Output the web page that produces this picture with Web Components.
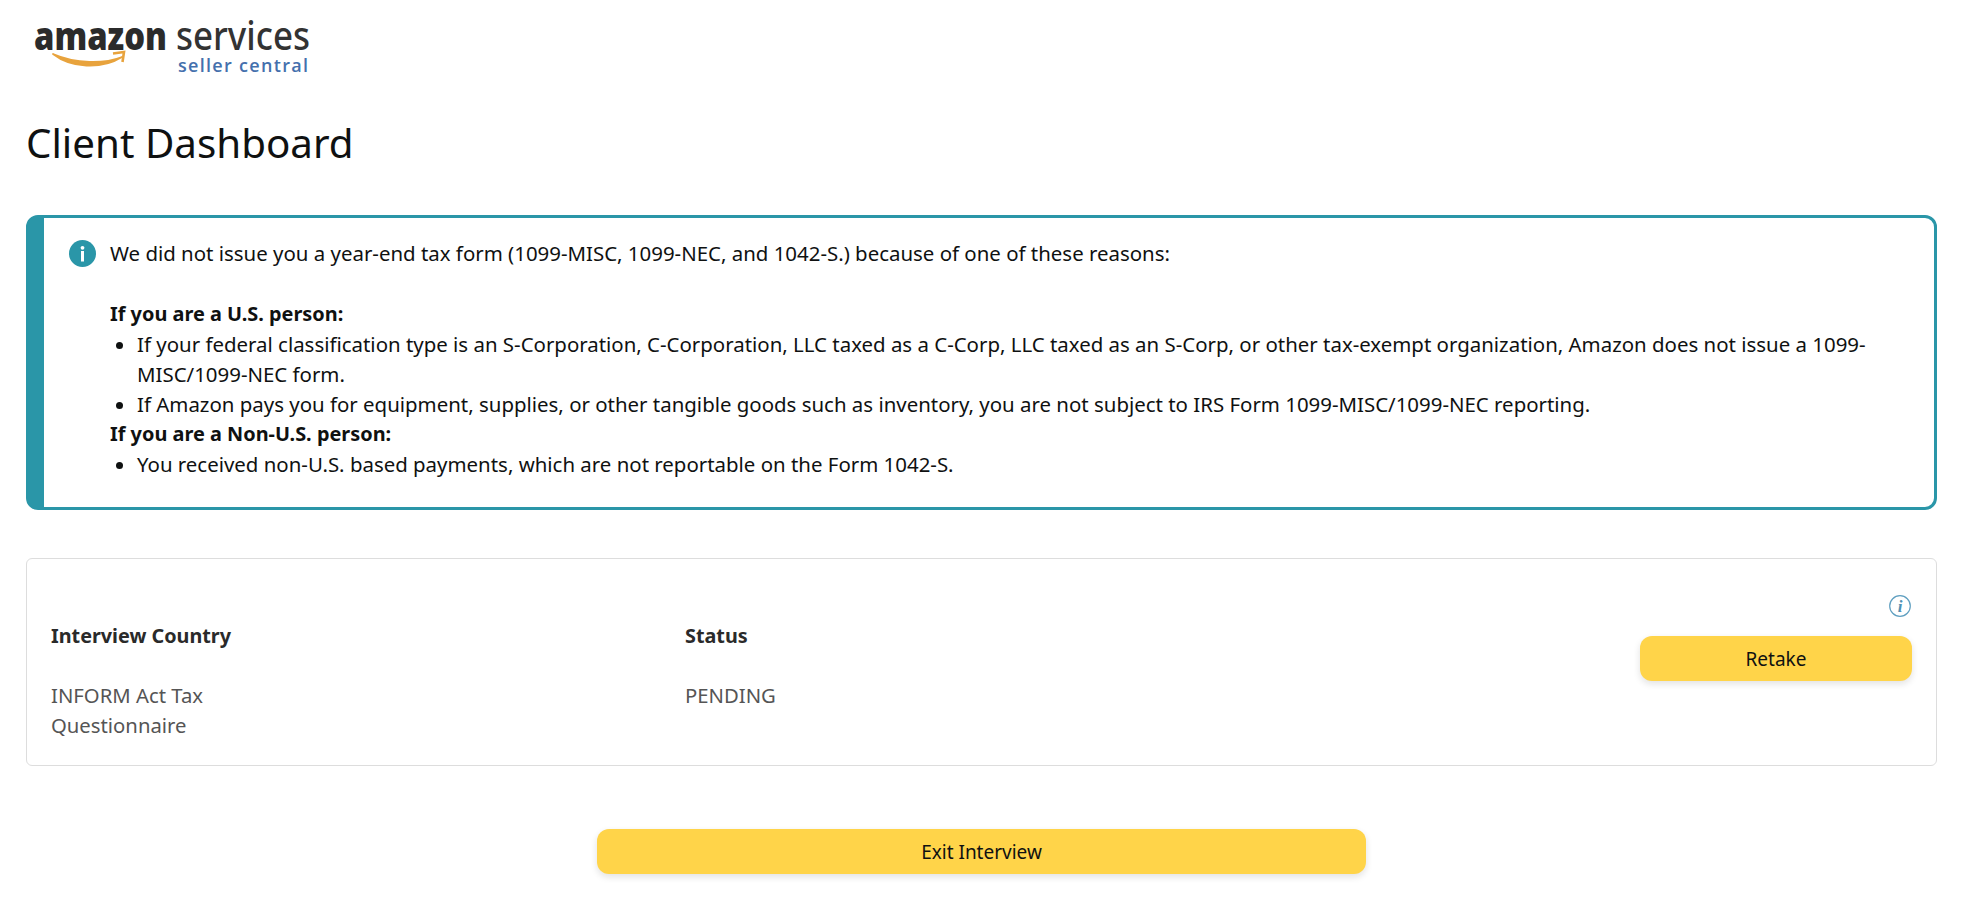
<!DOCTYPE html>
<html>
<head>
<meta charset="utf-8">
<title>Client Dashboard</title>
<style>
  html, body { margin: 0; background: #fff; }
  body { font-family: "Noto Sans", "Open Sans", sans-serif; color: #0f1111; }
</style>
</head>
<body>
<client-dashboard>
  <info-alert>
    <p slot="intro">We did not issue you a year-end tax form (1099-MISC, 1099-NEC, and 1042-S.) because of one of these reasons:</p>
    <b>If you are a U.S. person:</b>
    <ul>
      <li>If your federal classification type is an S-Corporation, C-Corporation, LLC taxed as a C-Corp, LLC taxed as an S-Corp, or other tax-exempt organization, Amazon does not issue a 1099-MISC/1099-NEC form.</li>
      <li>If Amazon pays you for equipment, supplies, or other tangible goods such as inventory, you are not subject to IRS Form 1099-MISC/1099-NEC reporting.</li>
    </ul>
    <b>If you are a Non-U.S. person:</b>
    <ul>
      <li>You received non-U.S. based payments, which are not reportable on the Form 1042-S.</li>
    </ul>
  </info-alert>
  <interview-card country="INFORM Act Tax Questionnaire" status="PENDING"></interview-card>
</client-dashboard>

<script>
const logoSvg = `
  <svg width="300" height="76" viewBox="0 0 300 76" aria-label="amazon services seller central">
    <text x="8" y="46" font-family="Open Sans, sans-serif" font-weight="800" font-size="38" fill="#2b2b2b" textLength="133" lengthAdjust="spacingAndGlyphs">amazon</text>
    <text x="150" y="46" font-family="Noto Sans, sans-serif" font-weight="500" font-size="39" fill="#333" textLength="134" lengthAdjust="spacingAndGlyphs">services</text>
    <text x="152" y="68" font-family="Open Sans, sans-serif" font-weight="600" font-size="18" fill="#4470ad" textLength="130" lengthAdjust="spacing">seller central</text>
    <path d="M27 50C45 64 75 66 96 53C78 60 50 60 27 50Z" fill="#e8a33d" stroke="#e8a33d" stroke-width="1.800" stroke-linejoin="round"/>
    <path d="M87 49.500L98 48L96.500 58" fill="none" stroke="#e8a33d" stroke-width="2.600"/>
  </svg>`;

class ClientDashboard extends HTMLElement {
  constructor() {
    super();
    this.attachShadow({ mode: 'open' });
    this.shadowRoot.innerHTML = `
      <style>
        :host { display: block; padding: 0 29px 0 26px; }
        .logo { display: block; height: 80px; }
        .logo svg { display: block; margin-top: 4px; }
        h1 { margin: 35px 0 48px; font-size: 40.300px; line-height: 48px; font-weight: 400; color: #0f1111; }
        .exit { display: flex; justify-content: center; padding: 63px 0 39px 0; }
        .exit yellow-button { width: 769px; }
        .stack { display: flex; flex-direction: column; gap: 48px; }
      </style>
      <div class="logo">${logoSvg}</div>
      <h1>Client Dashboard</h1>
      <div class="stack"><slot></slot></div>
      <div class="exit"><yellow-button>Exit Interview</yellow-button></div>
    `;
  }
}

class InfoAlert extends HTMLElement {
  constructor() {
    super();
    this.attachShadow({ mode: 'open' });
    this.shadowRoot.innerHTML = `
      <style>
        :host {
          display: block;
          box-sizing: border-box;
          border: 3px solid #2a96a8;
          border-left-width: 18px;
          border-radius: 12px;
          padding: 20px 24px 28px 25px;
          font-size: 20.430px;
          line-height: 30px;
          color: #0f1111;
        }
        .wrap { display: grid; grid-template-columns: 27px 1fr; column-gap: 14px; }
        svg { display: block; margin-top: 2px; }
        ::slotted(p) { margin: 0 0 31px; }
        ::slotted(b) { display: block; font-weight: 700; font-size: 19.900px; }
        ::slotted(ul) { margin: 0; padding: 0 0 0 27px; }
      </style>
      <div class="wrap">
        <svg width="27" height="27" viewBox="0 0 27 27">
          <circle cx="13.500" cy="13.500" r="13.500" fill="#2a96a8"/>
          <circle cx="13.500" cy="7.800" r="1.900" fill="#fff"/>
          <rect x="12" y="11" width="3" height="10.500" fill="#fff"/>
        </svg>
        <div><slot name="intro"></slot><slot></slot></div>
      </div>
    `;
  }
}

class InterviewCard extends HTMLElement {
  constructor() {
    super();
    this.attachShadow({ mode: 'open' });
    this.shadowRoot.innerHTML = `
      <style>
        :host {
          display: block;
          box-sizing: border-box;
          height: 208px;
          border: 1px solid #dddddd;
          border-radius: 6px;
          padding: 36px 24px 0 24px;
          font-size: 20.300px;
          line-height: 30px;
        }
        .row { display: grid; grid-template-columns: 634px 1fr 272px; }
        .label { font-weight: 700; font-size: 19.800px; color: #2a2a2a; margin: 26px 0 29px; }
        .value { color: #555; max-width: 230px; }
        .side { display: flex; flex-direction: column; align-items: flex-end; gap: 19px; }
        .side svg { display: block; margin-right: 1px; }
        yellow-button { width: 100%; }
      </style>
      <div class="row">
        <div><div class="label">Interview Country</div><div class="value">${this.getAttribute('country')}</div></div>
        <div><div class="label">Status</div><div class="value">${this.getAttribute('status')}</div></div>
        <div class="side">
          <svg width="22" height="22" viewBox="0 0 22 22">
            <circle cx="11" cy="11" r="10.300" fill="none" stroke="#5f9fc0" stroke-width="1.200"/>
            <text x="11" y="16.500" text-anchor="middle" font-family="Liberation Serif, serif" font-style="italic" font-weight="700" font-size="17" fill="#4f90b3">i</text>
          </svg>
          <yellow-button>Retake</yellow-button>
        </div>
      </div>
    `;
  }
}

class YellowButton extends HTMLElement {
  constructor() {
    super();
    this.attachShadow({ mode: 'open' });
    this.shadowRoot.innerHTML = `
      <style>
        :host {
          display: flex;
          align-items: center;
          justify-content: center;
          box-sizing: border-box;
          height: 45px;
          background: #ffd449;
          border-radius: 12px;
          box-shadow: 0 3px 7px rgba(15, 17, 17, 0.12);
          font-size: 19px;
          color: #0f1111;
        }
      </style>
      <slot></slot>
    `;
  }
}

customElements.define('client-dashboard', ClientDashboard);
customElements.define('info-alert', InfoAlert);
customElements.define('interview-card', InterviewCard);
customElements.define('yellow-button', YellowButton);
</script>
</body>
</html>
